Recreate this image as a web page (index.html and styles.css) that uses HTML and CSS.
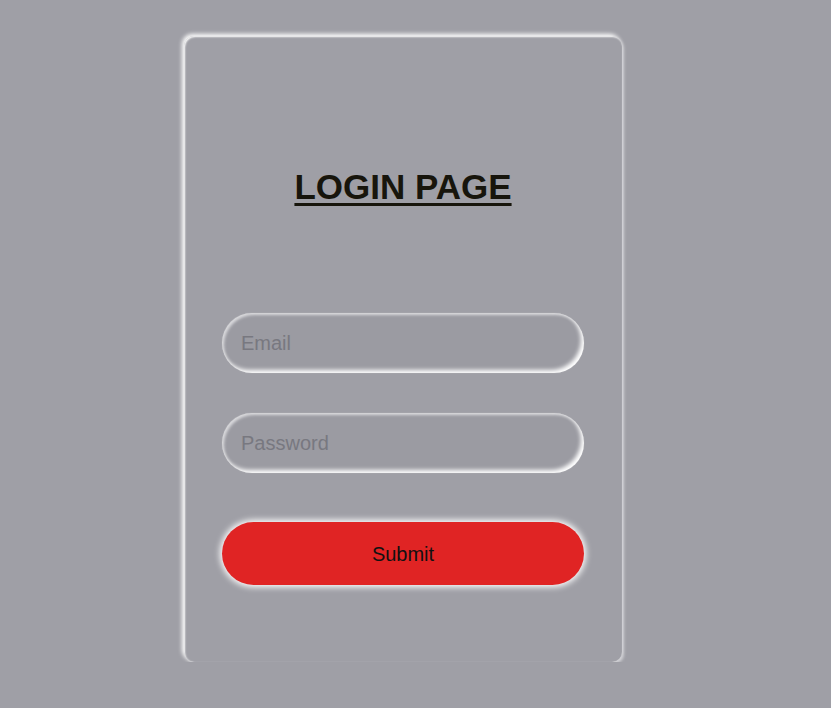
FILE: index.html
```html
<!DOCTYPE html>
<html>
<head>
<meta charset="utf-8">
<link rel="stylesheet" href="styles.css">
</head>
<body>
<div class="card">
  <h1 class="title">LOGIN PAGE</h1>
  <form class="form">
    <input class="field" type="text" placeholder="Email">
    <input class="field" type="password" placeholder="Password">
    <button class="submit" type="button">Submit</button>
  </form>
</div>
</body>
</html>
```
FILE: styles.css
```css
html, body {
  margin: 0;
  padding: 0;
  background: #9f9fa6;
  font-family: "Liberation Sans", Arial, sans-serif;
}
body {
  padding-top: 36px;
  padding-left: 184px;
}
.card {
  width: 438px;
  height: 626px;
  box-sizing: border-box;
  border-radius: 10px;
  background: #9f9fa6;
  box-shadow: -2px -2px 4px #ffffff, 2px 2px 3px #d0d0d4, inset 1px 1px 2px #ffffff;
  padding-top: 132px;
}
.title {
  margin: 0;
  text-align: center;
  font-size: 35px;
  font-weight: bold;
  text-decoration: underline;
  text-decoration-thickness: 3px;
  text-underline-offset: 4px;
  color: #17150c;
  line-height: 38px;
}
.form {
  display: flex;
  flex-direction: column;
  margin-top: 107px;
  padding: 0 38px;
}
.field {
  height: 60px;
  box-sizing: border-box;
  border: none;
  border-radius: 30px;
  background: #9b9ba2;
  padding: 0 19px;
  font-family: "Liberation Sans", Arial, sans-serif;
  font-size: 20px;
  color: #333;
  outline: none;
  box-shadow: inset -3px -3px 4px #ffffff, inset 2px 2px 3px #d9d9dc, 0 0 1px #c9c9cc;
  margin-bottom: 40px;
}
.field::placeholder {
  color: #787880;
}
.submit {
  margin-top: 9px;
  height: 63px;
  padding-top: 2px;
  border: none;
  border-radius: 32px;
  background: #e02424;
  font-family: "Liberation Sans", Arial, sans-serif;
  font-size: 20px;
  color: #111;
  box-shadow: 0 0 6px 2px #ffffff;
}
```
